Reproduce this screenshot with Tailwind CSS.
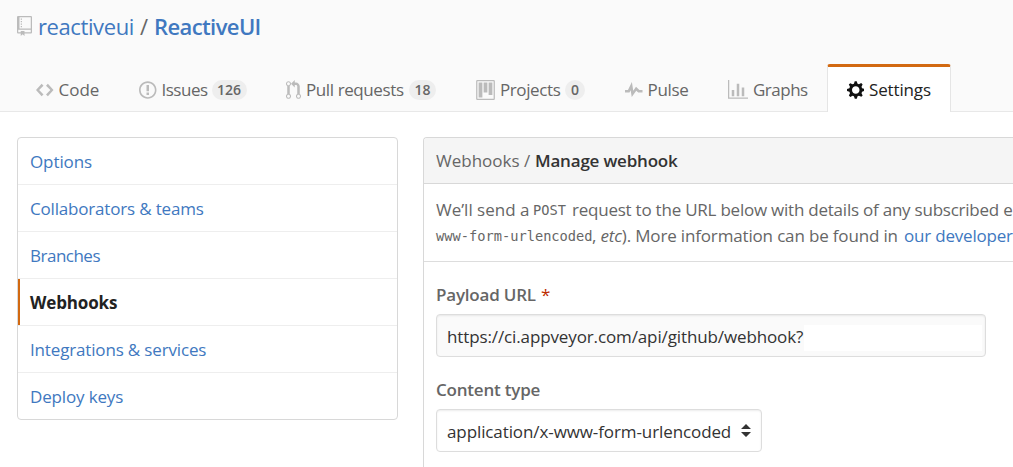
<!DOCTYPE html>
<html lang="en">
<head>
<meta charset="utf-8">
<title>ReactiveUI webhook settings</title>
<script src="https://cdn.jsdelivr.net/npm/@tailwindcss/browser@4"></script>
</head>
<body class="flex h-[467px] w-[1013px] flex-col overflow-hidden bg-white font-['Open_Sans','Noto_Sans',sans-serif] text-[17px] leading-[26px] text-[#666]">
<header class="flex h-[112px] shrink-0 flex-col justify-between border-b border-[#e8e8e8] bg-[#fafafa]">
  <div class="flex h-[51px] items-center pl-[17px] text-[22px] leading-[30px] whitespace-nowrap text-[#4078c0]">
    <svg class="h-5 w-[15px] shrink-0 fill-[#bbb]" viewBox="0 0 12 16"><path d="M4 9H3V8h1v1zm0-3H3v1h1V6zm0-2H3v1h1V4zm0-2H3v1h1V2zm8-1v12c0 .55-.45 1-1 1H6v2l-1.5-1.5L3 16v-2H1c-.55 0-1-.45-1-1V1c0-.55.45-1 1-1h10c.55 0 1 .45 1 1zm-1 10H1v2h2v-1h3v1h5v-2zm0-10H2v9h9V1z"/></svg>
    <a class="ml-1.5 w-[102px] tracking-[-0.4px]">reactiveui</a><span class="w-[14px] text-[#666]">/</span><a class="font-semibold tracking-[-0.6px]">ReactiveUI</a>
  </div>
  <nav class="-mb-px flex h-12 items-end pl-9 whitespace-nowrap">
    <a class="flex h-[45px] w-[103px] items-center"><svg class="h-5 w-[17.5px] fill-[#bbb]" viewBox="0 0 14 16"><path d="M9.5 3L8 4.5 11.5 8 8 11.5 9.5 13 14 8 9.5 3zm-5 0L0 8l4.5 5L6 11.5 2.5 8 6 4.5 4.5 3z"/></svg><span class="ml-[5px]">Code</span></a>
    <a class="flex h-[45px] w-[147px] items-center"><svg class="h-5 w-[17.5px] fill-[#bbb]" viewBox="0 0 14 16"><path d="M7 2.3c3.14 0 5.7 2.56 5.7 5.7s-2.56 5.7-5.7 5.7A5.71 5.71 0 0 1 1.3 8c0-3.14 2.56-5.7 5.7-5.7zM7 1C3.14 1 0 4.14 0 8s3.14 7 7 7 7-3.14 7-7-3.14-7-7-7zm1 3H6v5h2V4zm0 6H6v2h2v-2z"/></svg><span class="ml-[5px] w-[50px] tracking-[-0.5px]">Issues</span><b class="flex h-5 w-[35px] items-center justify-center rounded-full bg-[#eee] text-[14px] font-semibold">126</b></a>
    <a class="flex h-[45px] w-[190px] items-center"><svg class="h-5 w-[15px] fill-[#bbb]" viewBox="0 0 12 16"><path d="M11 11.28V5c-.03-.78-.34-1.47-.94-2.06C9.46 2.35 8.78 2.03 8 2H7V0L4 3l3 3V4h1c.27.02.48.11.69.31.21.2.3.42.31.69v6.28A1.993 1.993 0 0 0 10 15a1.993 1.993 0 0 0 1-3.72zm-1 2.92c-.66 0-1.2-.55-1.2-1.2 0-.65.55-1.2 1.2-1.2.65 0 1.2.55 1.2 1.2 0 .65-.55 1.2-1.2 1.2zM4 3c0-1.11-.89-2-2-2a1.993 1.993 0 0 0-1 3.72v6.56A1.993 1.993 0 0 0 2 15a1.993 1.993 0 0 0 1-3.72V4.72c.59-.34 1-.98 1-1.72zm-.8 10c0 .66-.55 1.2-1.2 1.2-.65 0-1.2-.55-1.2-1.2 0-.65.55-1.2 1.2-1.2.65 0 1.2.55 1.2 1.2zM2 4.2C1.34 4.2.8 3.65.8 3c0-.65.55-1.2 1.2-1.2.65 0 1.2.55 1.2 1.2 0 .65-.55 1.2-1.2 1.2z"/></svg><span class="ml-[5px] w-[103px] tracking-[-0.4px]">Pull requests</span><b class="flex h-5 w-[27px] items-center justify-center rounded-full bg-[#eee] text-[14px] font-semibold">18</b></a>
    <a class="flex h-[45px] w-[149px] items-center"><svg class="h-5 w-[19px] fill-[#bbb]" viewBox="0 0 15 16"><path fill-rule="evenodd" d="M10 12h3V2h-3v10zm-4-2h3V2H6v8zm-4 4h3V2H2v12zm-1 1h13V1H1v14zM14 0H1a1 1 0 0 0-1 1v14a1 1 0 0 0 1 1h13a1 1 0 0 0 1-1V1a1 1 0 0 0-1-1z"/></svg><span class="ml-[5px] w-[65px] tracking-[-0.4px]">Projects</span><b class="flex size-5 items-center justify-center rounded-full bg-[#eee] text-[14px] font-semibold">0</b></a>
    <a class="flex h-[45px] w-[103px] items-center"><svg class="h-5 w-[17.5px] fill-[#bbb]" viewBox="0 0 14 16"><path d="M11.5 8L8.8 5.4 6.6 8.5 5.5 1.6 2.38 8H0v2h3.6l.9-1.8.9 5.4L9 8.5l1.6 1.5H14V8h-2.5z"/></svg><span class="ml-[5px] tracking-[-0.3px]">Pulse</span></a>
    <a class="flex h-[45px] w-[99px] items-center"><svg class="size-5 fill-[#bbb]" viewBox="0 0 16 16"><path d="M16 14v1H0V0h1v14h15zM5 13H3V8h2v5zm4 0H7V3h2v10zm4 0h-2V6h2v7z"/></svg><span class="ml-[5px] tracking-[-0.5px]">Graphs</span></a>
    <a class="flex h-12 w-[124px] items-center rounded-t-[3px] border-x border-t-3 border-x-[#e5e5e5] border-t-[#d26911] bg-white pl-[18.5px] text-[#222]"><svg class="h-5 w-[17.5px] fill-[#111]" viewBox="0 0 14 16"><path d="M14 8.77v-1.6l-1.94-.64-.45-1.09.88-1.84-1.13-1.13-1.81.91-1.09-.45-.69-1.92h-1.6l-.63 1.94-1.11.45-1.84-.88-1.13 1.13.91 1.81-.45 1.09L0 7.23v1.59l1.94.64.45 1.09-.88 1.84 1.13 1.13 1.81-.91 1.09.45.69 1.92h1.59l.63-1.94 1.11-.45 1.84.88 1.13-1.13-.92-1.81.47-1.09L14 8.75v.02zM7 11c-1.66 0-3-1.34-3-3s1.34-3 3-3 3 1.34 3 3-1.34 3-3 3z"/></svg><span class="ml-[5px] tracking-[-0.15px]">Settings</span></a>
  </nav>
</header>
<main class="flex min-h-0 grow gap-[25px] pt-[25px] pl-[17px] whitespace-nowrap">
  <aside class="h-[283px] w-[381px] shrink-0 overflow-hidden rounded-[4px] border border-[#d8d8d8] text-[#4078c0]">
    <a class="flex h-[47px] items-center border-b border-[#eee] pt-0.5 pl-3 tracking-[-0.1px]">Options</a>
    <a class="flex h-[47px] items-center border-b border-[#eee] pt-0.5 pl-3 tracking-[-0.18px]">Collaborators &amp; teams</a>
    <a class="flex h-[47px] items-center border-b border-[#eee] pt-0.5 pl-3 tracking-[-0.5px]">Branches</a>
    <a class="flex h-[47px] items-center border-b border-[#eee] pt-0.5 pl-3 font-bold tracking-[-0.15px] text-[#222] shadow-[inset_2px_0_0_#d26911]">Webhooks</a>
    <a class="flex h-[47px] items-center border-b border-[#eee] pt-0.5 pl-3 tracking-[-0.16px]">Integrations &amp; services</a>
    <a class="flex h-[46px] items-center pt-0.5 pl-3 tracking-[-0.15px]">Deploy keys</a>
  </aside>
  <section class="min-w-0 grow rounded-tl-[4px] border-t border-l border-[#d8d8d8]">
    <h2 class="flex h-[46px] items-center rounded-tl-[3px] border-b border-[#d8d8d8] bg-[#f5f5f5] pl-3"><span class="w-[99px]">Webhooks /</span><b class="font-semibold tracking-[-0.2px] text-[#333]">Manage webhook</b></h2>
    <div class="h-[78px] overflow-hidden border-b border-[#ddd] pt-[13px] pl-3">
      <p class="flex"><span class="w-[97px]">We’ll send a</span><code class="w-[39px] font-['DejaVu_Sans_Mono',monospace] text-[13.7px]">POST</code><span class="tracking-[-0.23px]">request to the URL below with details of any subscribed e</span></p>
      <p class="flex"><code class="w-[156px] font-['DejaVu_Sans_Mono',monospace] text-[13.7px]">www-form-urlencoded</code><span class="w-[312px] tracking-[-0.16px]">, <i>etc</i>). More information can be found in</span><a class="tracking-[-0.2px] text-[#4078c0]">our developer</a></p>
    </div>
    <form class="pt-5 pl-3">
      <label class="flex font-semibold"><span class="w-[105px] tracking-[-0.2px]">Payload URL</span><b class="font-normal text-[#bd2c00]">*</b></label>
      <div class="mt-[6px] flex h-[43px] w-[550px] items-center rounded-[4px] border border-[#ddd] bg-[#fafafa] pr-[3px] pl-[10px] text-[#333] shadow-[inset_0_1px_2px_rgba(0,0,0,0.075)]"><span class="pt-0.5 tracking-[-0.12px]">https://ci.appveyor.com/api/github/webhook?</span><i class="mt-[5px] ml-auto h-[26px] w-[178px] bg-white"></i></div>
      <label class="mt-5 flex font-semibold tracking-[-0.2px]">Content type</label>
      <div class="mt-[6px] flex h-[43px] w-[326px] items-center rounded-[4px] border border-[#ddd] pr-[10px] pl-[10px] text-[#333] shadow-[inset_0_1px_2px_rgba(0,0,0,0.075)]"><span class="pt-0.5 tracking-[-0.1px]">application/x-www-form-urlencoded</span><svg class="ml-auto h-[13px] w-[10px] fill-[#333]" viewBox="0 0 10 13"><path d="M5 0L10 5H0zM0 8H10L5 13z"/></svg></div>
    </form>
  </section>
</main>
</body>
</html>
